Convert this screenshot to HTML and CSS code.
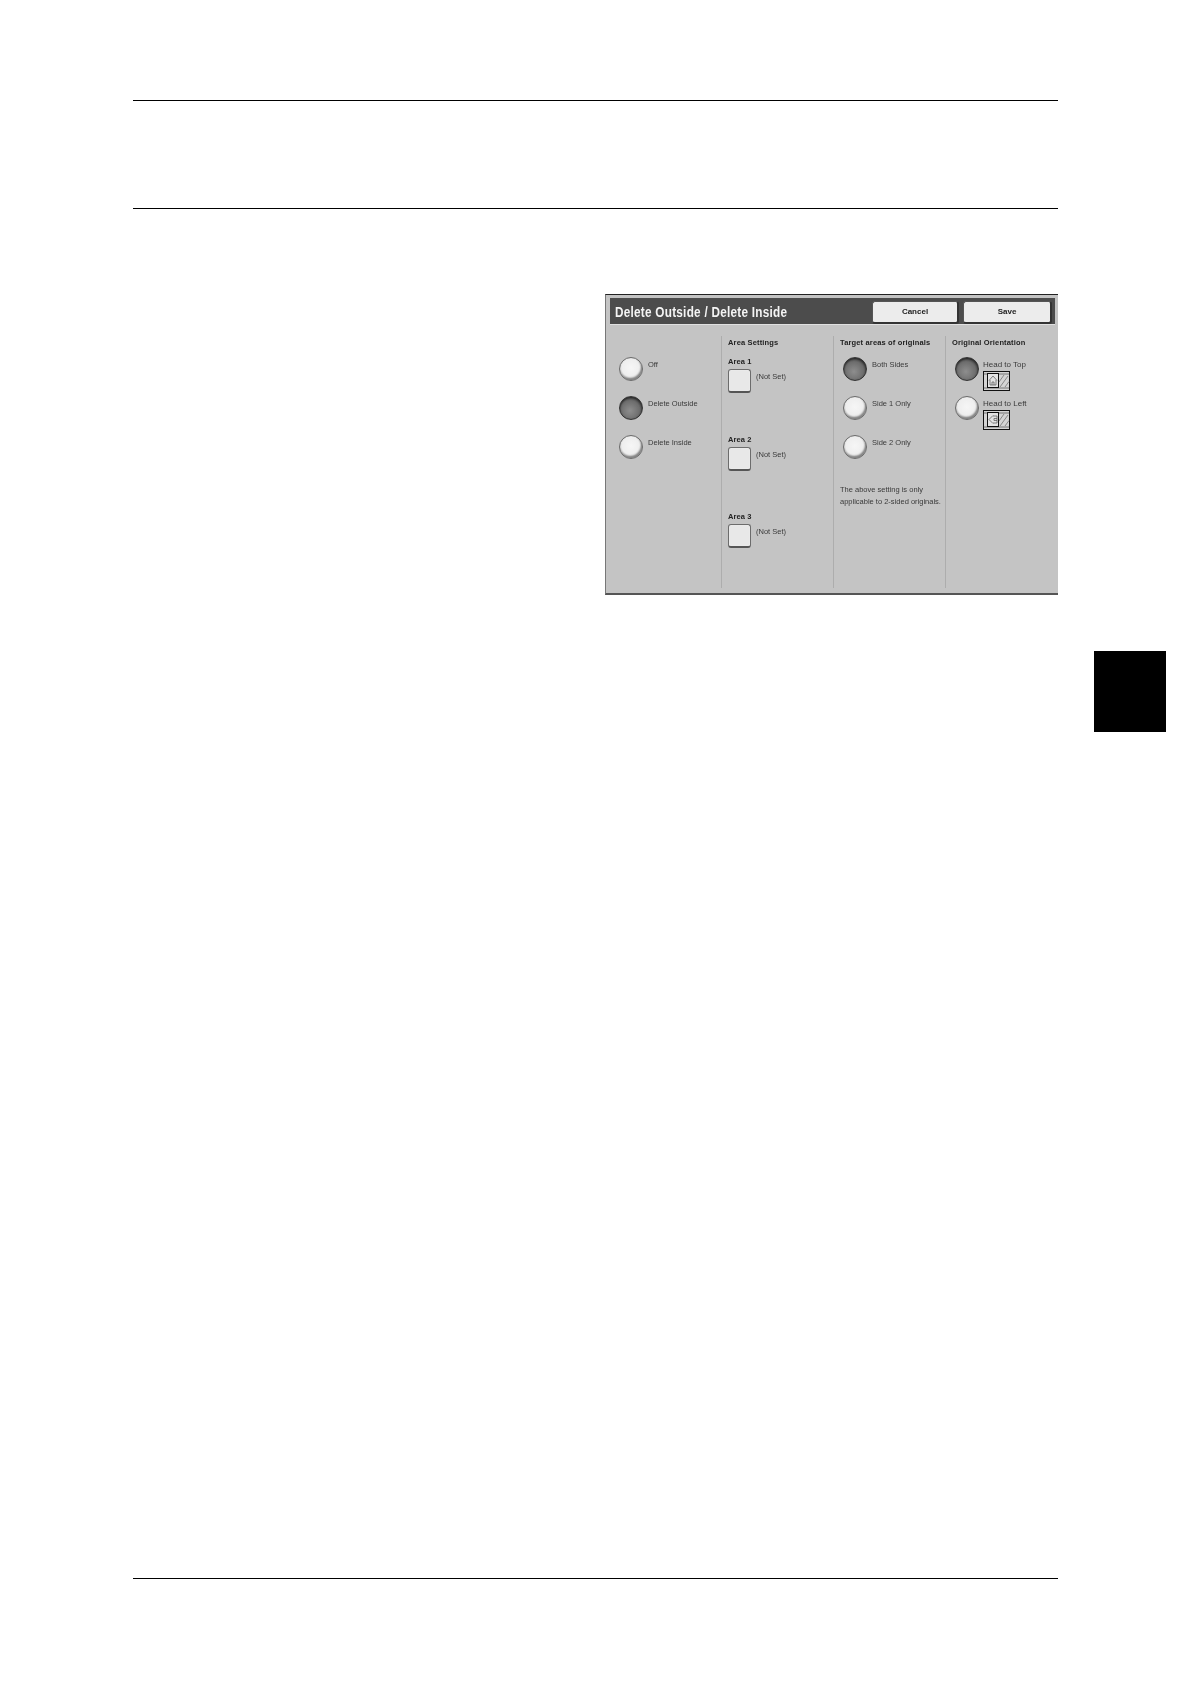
FILE: index.html
```html
<!DOCTYPE html>
<html lang="en">

<head>
    <meta charset="UTF-8">
    <title>Delete Outside / Delete Inside</title>
    <link rel="stylesheet" href="styles.css">
</head>

<body>
    <div class="page">
        <div class="rule"></div>
        <div class="rule rule-second"></div>

        <div class="panel">
            <div class="title-bar">
                <span class="title">Delete Outside / Delete Inside</span>
                <button class="action action-cancel">Cancel</button>
                <button class="action action-save">Save</button>
            </div>

            <div class="columns">
                <div class="col col-mode">
                    <div class="option"><span class="radio"></span><span class="label">Off</span></div>
                    <div class="option"><span class="radio on"></span><span class="label">Delete Outside</span></div>
                    <div class="option"><span class="radio"></span><span class="label">Delete Inside</span></div>
                </div>

                <div class="col col-area">
                    <div class="col-head">Area Settings</div>
                    <div class="area">
                        <div class="area-name">Area 1</div>
                        <div class="area-row"><span class="square"></span><span class="label">(Not Set)</span></div>
                    </div>
                    <div class="area">
                        <div class="area-name">Area 2</div>
                        <div class="area-row"><span class="square"></span><span class="label">(Not Set)</span></div>
                    </div>
                    <div class="area">
                        <div class="area-name">Area 3</div>
                        <div class="area-row"><span class="square"></span><span class="label">(Not Set)</span></div>
                    </div>
                </div>

                <div class="col col-target">
                    <div class="col-head">Target areas of originals</div>
                    <div class="option"><span class="radio on"></span><span class="label">Both Sides</span></div>
                    <div class="option"><span class="radio"></span><span class="label">Side 1 Only</span></div>
                    <div class="option"><span class="radio"></span><span class="label">Side 2 Only</span></div>
                    <p class="note">The above setting is only<br>applicable to 2-sided originals.</p>
                </div>

                <div class="col col-orient">
                    <div class="col-head">Original Orientation</div>
                    <div class="option">
                        <span class="radio on"></span>
                        <div class="label-stack">
                            <span class="label">Head to Top</span>
                            <svg class="orient-icon" viewBox="0 0 27 20">
                                <rect x="0.5" y="0.5" width="26" height="19" fill="#d4d4d4" stroke="#111" />
                                <path d="M0.5 3h26M0.5 17h26" stroke="#333" stroke-width="0.6" />
                                <rect x="4.500" y="2.500" width="11" height="14" fill="#e4e4e4" stroke="#111" />
                                <path d="M6 9.500l4-4.500 4 4.500M7 9v5h6V9M9 14v-3h2v3" fill="none" stroke="#555" stroke-width="0.7" />
                                <path d="M16 11l5-7M17 16l8-11M22 16l4-5.500" stroke="#666" stroke-width="0.7" />
                            </svg>
                        </div>
                    </div>
                    <div class="option">
                        <span class="radio"></span>
                        <div class="label-stack">
                            <span class="label">Head to Left</span>
                            <svg class="orient-icon" viewBox="0 0 27 20">
                                <rect x="0.5" y="0.5" width="26" height="19" fill="#d4d4d4" stroke="#111" />
                                <path d="M0.5 3h26M0.5 17h26" stroke="#333" stroke-width="0.6" />
                                <rect x="4.500" y="2.500" width="11" height="14" fill="#e4e4e4" stroke="#111" />
                                <path d="M10 5.500l-4 4 4 4M10 6h4v7h-4M14 8.500h-3v2h3" fill="none" stroke="#555" stroke-width="0.7" />
                                <path d="M16 11l5-7M17 16l8-11M22 16l4-5.500" stroke="#666" stroke-width="0.7" />
                            </svg>
                        </div>
                    </div>
                </div>
            </div>
        </div>

        <div class="rule rule-bottom"></div>
    </div>

    <div class="tab"></div>
</body>

</html>
```

FILE: styles.css
```css
body {
    margin: 0;
    background-color: #fff;
    display: flex;
    align-items: flex-start;
    font-family: "Liberation Sans", Arial, sans-serif;
}

.page {
    width: 925px;
    margin-left: 133px;
    padding-top: 100px;
    display: flex;
    flex-direction: column;
}

.rule {
    height: 1px;
    background-color: #000;
}

.rule-second {
    margin-top: 107px;
}

.rule-bottom {
    margin-top: 983px;
}

.tab {
    width: 72px;
    height: 81px;
    margin-left: 36px;
    margin-top: 651px;
    background-color: #000;
}

.panel {
    align-self: flex-end;
    width: 453px;
    height: 301px;
    margin-top: 85px;
    box-sizing: border-box;
    background-color: #c4c4c4;
    border-top: 1px solid #222;
    border-left: 1px solid #777;
    border-bottom: 2px solid #555;
    padding: 3px 3px 0 4px;
    filter: blur(0.4px);
}

.title-bar {
    height: 27px;
    display: flex;
    align-items: center;
    background-color: #4c4c4c;
    border-bottom: 1px solid #e0e0e0;
    box-sizing: border-box;
    padding: 0 3px 0 5px;
}

/* the original title face is a condensed one, so squeeze it */
.title {
    flex: 1;
    margin-top: 2px;
    color: #f4f4f4;
    font-size: 14px;
    font-weight: bold;
    letter-spacing: 0.3px;
    white-space: nowrap;
    transform: scaleX(0.84);
    transform-origin: left center;
}

.action {
    height: 23px;
    margin-top: 2px;
    padding: 0;
    box-sizing: border-box;
    background-color: #ececec;
    border: 1px solid #555;
    border-right: 2px solid #333;
    border-bottom: 2px solid #333;
    border-radius: 3px;
    font-family: inherit;
    font-size: 8px;
    font-weight: bold;
    color: #222;
}

.action-cancel {
    width: 87px;
    margin-right: 4px;
}

.action-save {
    width: 89px;
}

.columns {
    display: flex;
    margin-top: 11px;
    height: 252px;
}

.col {
    box-sizing: border-box;
    border-right: 1px solid #adadad;
    padding-left: 6px;
}

.col-mode {
    width: 112px;
    padding-top: 21px;
    padding-left: 9px;
}

.col-area {
    width: 112px;
}

.col-target {
    width: 112px;
}

.col-orient {
    flex: 1;
    border-right: none;
}

.col-head {
    height: 14px;
    line-height: 14px;
    font-size: 7.500px;
    font-weight: bold;
    letter-spacing: 0.15px;
    color: #222;
}

.col-area .col-head {
    margin-bottom: 5px;
}

.col-target .col-head,
.col-orient .col-head {
    margin-bottom: 7px;
}

.option {
    display: flex;
    align-items: flex-start;
    height: 39px;
}

.col-target .option,
.col-orient .option {
    padding-left: 3px;
}

.radio {
    flex: none;
    width: 24px;
    height: 24px;
    box-sizing: border-box;
    border-radius: 50%;
    margin-right: 5px;
    background: radial-gradient(circle at 50% 45%, #f6f6f6 0, #eeeeee 55%, #b8b8b8 85%);
    border: 1px solid #6c6c6c;
    box-shadow: inset -1px -2px 2px #808080;
}

.radio.on {
    background: radial-gradient(circle at 45% 62%, #8e8e8e 0, #6c6c6c 55%, #3a3a3a 85%);
    border-color: #333;
    box-shadow: inset 0 1px 2px #222;
}

.label {
    font-size: 7.500px;
    line-height: 10px;
    color: #3a3a3a;
    white-space: nowrap;
}

.option > .label {
    margin-top: 3px;
}

.label-stack {
    display: flex;
    flex-direction: column;
    margin-top: 3px;
    margin-left: -1px;
}

.label-stack .label {
    font-size: 8px;
}

.orient-icon {
    width: 27px;
    height: 20px;
    margin-top: 1px;
}

.area {
    height: 77.500px;
}

.area-name {
    height: 14px;
    line-height: 13px;
    font-size: 7.500px;
    font-weight: bold;
    letter-spacing: 0.1px;
    color: #222;
}

.area-row {
    display: flex;
    align-items: flex-start;
}

.square {
    flex: none;
    width: 23px;
    height: 24px;
    box-sizing: border-box;
    margin-right: 5px;
    background-color: #e8e8e8;
    border: 1px solid #6c6c6c;
    border-bottom: 2px solid #555;
    border-radius: 3px;
    box-shadow: inset 0 0 1px #fff;
}

.area-row .label {
    margin-top: 3px;
}

.note {
    margin: 10px 0 0 0;
    font-size: 7.500px;
    line-height: 12px;
    color: #3a3a3a;
    white-space: nowrap;
}
```
